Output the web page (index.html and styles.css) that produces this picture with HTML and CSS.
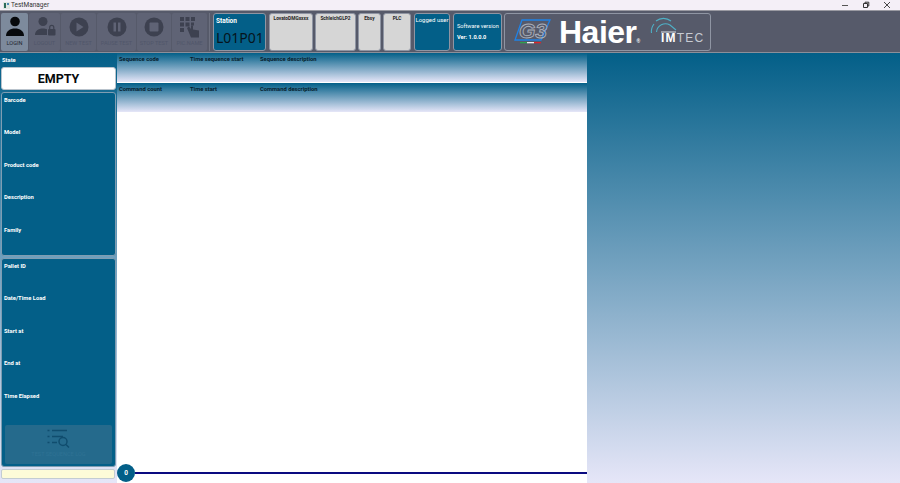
FILE: index.html
```html
<!DOCTYPE html>
<html lang="en">
<head>
    <meta charset="UTF-8">
    <title>TestManager</title>
    <link rel="stylesheet" href="styles.css">
</head>
<body>
    <div class="titlebar">
        <div class="title-left">
            <svg class="app-icon" width="7" height="7" viewBox="0 0 7 7"><rect width="7" height="7" fill="#dfe6e2"/><rect x="1" y="1" width="2" height="5" fill="#2d6b5a"/><rect x="4" y="1" width="2" height="2" fill="#4d89b5"/></svg>
            <span>TestManager</span>
        </div>
        <div class="win-buttons">
            <svg width="8" height="8" viewBox="0 0 8 8"><path d="M1 4.5H7" stroke="#555" stroke-width="1"/></svg>
            <svg width="8" height="8" viewBox="0 0 8 8"><path d="M1.5 2.5H5.5V6.5H1.5ZM3 2.5V1.2H6.8V5H5.5" fill="none" stroke="#333" stroke-width="1"/></svg>
            <svg width="8" height="8" viewBox="0 0 8 8"><path d="M1 1L7 7M7 1L1 7" stroke="#333" stroke-width="0.9"/></svg>
        </div>
    </div>

    <div class="topbar">
        <div class="tool active w-login">
            <svg width="20" height="22" viewBox="0 0 20 22"><circle cx="10" cy="5.5" r="4.8" fill="#07090c"/><path d="M1 20C1 15 5 12.5 10 12.5S19 15 19 20Z" fill="#07090c"/></svg>
            <span>LOGIN</span>
        </div>
        <div class="tool w-logout">
            <svg width="22" height="22" viewBox="0 0 22 22"><circle cx="9" cy="5.5" r="4.5" fill="#3d4150"/><path d="M1 19C1 15 4 12.5 9 12.5C10.5 12.5 12 12.8 13 13.3V19Z" fill="#3d4150"/><rect x="14" y="13" width="7.5" height="6.5" rx="1" fill="#3d4150"/><path d="M15.7 13V11.5A2 2 0 0 1 19.8 11.5V13" fill="none" stroke="#3d4150" stroke-width="1.2"/></svg>
            <span>LOGOUT</span>
        </div>
        <div class="tool w-new">
            <svg width="22" height="22" viewBox="0 0 22 22"><circle cx="11" cy="11" r="9.5" fill="#3d4150"/><path d="M8.5 6.5L15.5 11L8.5 15.5Z" fill="#5f6375"/></svg>
            <span>NEW TEST</span>
        </div>
        <div class="tool w-pause">
            <svg width="22" height="22" viewBox="0 0 22 22"><circle cx="11" cy="11" r="9.5" fill="#3d4150"/><rect x="7.5" y="6.5" width="2.5" height="9" fill="#5f6375"/><rect x="12" y="6.5" width="2.5" height="9" fill="#5f6375"/></svg>
            <span>PAUSE TEST</span>
        </div>
        <div class="tool w-stop">
            <svg width="22" height="22" viewBox="0 0 22 22"><circle cx="11" cy="11" r="9.5" fill="#3d4150"/><rect x="6.5" y="6.5" width="9" height="9" rx="1" fill="#5f6375"/></svg>
            <span>STOP TEST</span>
        </div>
        <div class="tool w-pic">
            <svg width="22" height="22" viewBox="0 0 22 22" fill="#3d4150"><rect x="1" y="1" width="4" height="4"/><rect x="6.5" y="1" width="4" height="4"/><rect x="12" y="1" width="4" height="4"/><rect x="1" y="6.5" width="4" height="4"/><rect x="6.5" y="6.5" width="4" height="4"/><rect x="1" y="12" width="4" height="4"/><rect x="12" y="6.5" width="3" height="3"/><path d="M8 12L10 10.500L12 13V9.500H14V13.500L20 14.500V21.500H12Z"/></svg>
            <span>PIC.NAME</span>
        </div>
        <div class="sep"></div>

        <div class="box blue station">
            <b>Station</b>
            <div class="station-code">L01P01</div>
        </div>
        <div class="box grey w-lovato">LovatoDMGxxxx</div>
        <div class="box grey w-schleich">SchleichGLP2</div>
        <div class="box grey w-ebsy">Ebsy</div>
        <div class="box grey w-plc">PLC</div>
        <div class="box blue logged">Logged user</div>
        <div class="box blue software">
            <span>Software version</span>
            <b>Ver: 1.0.0.0</b>
        </div>

        <div class="logos">
            <div class="logo-g3">
                <svg width="42" height="28" viewBox="0 0 42 28">
                    <path d="M11 2H39L30 22H4Z" fill="none" stroke="#1f82e6" stroke-width="1.300"/>
                    <text x="8" y="19.500" class="g3-text">G3</text>
                    <rect x="9" y="24" width="7" height="1.300" fill="#2e9e4f"/>
                    <rect x="16" y="24" width="7" height="1.300" fill="#eee"/>
                    <rect x="23" y="24" width="7" height="1.300" fill="#d8262c"/>
                </svg>
            </div>
            <div class="logo-haier">Haier<i>®</i></div>
            <div class="logo-imtec">
                <svg width="28" height="23" viewBox="0 0 28 23" fill="none" stroke="#4fb0c6" stroke-width="1.100">
                    <path d="M1.500 16A12 12 0 0 1 4 7"/>
                    <path d="M6 4A12 12 0 0 1 21 4"/>
                    <path d="M6.500 15A9 9 0 0 1 20 8L26 13"/>
                    <path d="M11 15H26" stroke="#cfd6dc"/>
                </svg>
                <div class="imtec-text"><b>IM</b>TEC</div>
            </div>
        </div>
    </div>

    <div class="main">
        <div class="sidebar">
            <div class="state-label">State</div>
            <div class="state-box">EMPTY</div>

            <div class="panel panel-product">
                <div class="row">Barcode</div>
                <div class="row">Model</div>
                <div class="row">Product code</div>
                <div class="row">Description</div>
                <div class="row">Family</div>
            </div>

            <div class="panel panel-pallet">
                <div class="row">Pallet ID</div>
                <div class="row">Date/Time Load</div>
                <div class="row">Start at</div>
                <div class="row">End at</div>
                <div class="row">Time Elapsed</div>
                <div class="log-btn">
                    <svg width="23" height="19" viewBox="0 0 23 19" fill="none" stroke="#104d6e" stroke-width="1.500">
                        <path d="M5 1.500H20M5 7.500H16M5 13.500H10"/>
                        <path d="M0.500 1.500H2.500M0.500 7.500H2.500M0.500 13.500H2.500"/>
                        <circle cx="16" cy="12.500" r="4"/>
                        <path d="M19 15.500L22 18.500"/>
                    </svg>
                    <span>TEST SEQUENCE LOG</span>
                </div>
            </div>

            <div class="status-input"></div>
        </div>

        <div class="center">
            <div class="grid-head">
                <span class="c1">Sequence code</span>
                <span class="c2">Time sequence start</span>
                <span>Sequence description</span>
            </div>
            <div class="grid-head">
                <span class="c1">Command count</span>
                <span class="c2">Time start</span>
                <span>Command description</span>
            </div>
            <div class="grid-body"></div>
            <div class="progress">
                <div class="counter">0</div>
                <div class="progress-line"></div>
            </div>
        </div>

        <div class="right"></div>
    </div>
</body>
</html>
```

FILE: styles.css
```css
* {
    box-sizing: border-box;
}
html, body {
    height: 100%;
}
body {
    margin: 0;
    overflow: hidden;
    display: flex;
    flex-direction: column;
    font-family: Roboto, "Noto Sans", sans-serif;
    font-size: 5.8px;
    background: #fff;
}

/* window title */
.titlebar {
    height: 10px;
    flex: none;
    display: flex;
    justify-content: space-between;
    align-items: center;
    background: #f4eff7;
    color: #333;
}
.title-left {
    display: flex;
    align-items: center;
    gap: 1px;
    padding-left: 3px;
    font-size: 6.5px;
}
.win-buttons {
    display: flex;
    gap: 13px;
    padding-right: 9px;
}

/* top bar */
.topbar {
    height: 43px;
    flex: none;
    display: flex;
    align-items: stretch;
    padding: 2px 0 1px 1px;
    background: #565a6a;
    border-top: 1px solid #9a9aa2;
    border-bottom: 1px solid #8b8f9a;
}
.tool {
    display: flex;
    flex-direction: column;
    align-items: center;
    padding-top: 3px;
    margin-right: 1px;
    border-radius: 2px;
    background: #5f6375;
    color: #50566a;
    font-size: 5.6px;
}
.tool svg {
    flex: none;
}
.tool span {
    margin-top: 2px;
    white-space: nowrap;
}
.tool.active {
    background: #7d8a9c;
    color: #1d2530;
}
.w-login { width: 27px; }
.w-logout { width: 31px; }
.w-new { width: 35px; }
.w-pause { width: 39px; }
.w-stop { width: 34px; }
.w-pic { width: 35px; margin-right: 0; }
.sep {
    width: 1px;
    margin: 0 3px 0 2px;
    background: #6d7180;
}
.box {
    margin-right: 2px;
    border-radius: 3px;
    border: 1px solid #8f95a3;
}
.blue {
    background: #035f88;
    color: #fff;
}
.grey {
    background: #d6d6d6;
    color: #222;
    font-size: 4.8px;
    font-weight: 700;
    text-align: center;
    padding-top: 2px;
}
.station {
    width: 53px;
    margin-right: 3px;
    padding: 3px 2px;
    font-size: 6.5px;
}
.station-code {
    margin-top: 4px;
    color: #06141c;
    font-family: "Noto Sans", sans-serif;
    font-size: 14px;
    line-height: 18px;
    white-space: nowrap;
}
.w-lovato { width: 44px; }
.w-schleich { width: 41px; }
.w-ebsy { width: 23px; }
.w-plc { width: 28px; margin-right: 3px; }
.logged {
    width: 36px;
    margin-right: 3px;
    padding-top: 2px;
    text-align: center;
    white-space: nowrap;
    font-size: 6px;
}
.software {
    width: 49px;
    padding: 9px 0 0 3px;
    display: flex;
    flex-direction: column;
    gap: 5px;
    font-size: 5.6px;
    white-space: nowrap;
}
.logos {
    width: 207px;
    display: flex;
    align-items: center;
    padding-left: 6px;
    border: 1px solid #8f95a3;
    border-radius: 3px;
}
.logo-g3 {
    width: 48px;
    height: 28px;
}
.g3-text {
    font-family: "Liberation Sans", sans-serif;
    font-size: 21px;
    font-weight: 700;
    font-style: italic;
    fill: none;
    stroke: #aab0bb;
    stroke-width: 0.9px;
}
.logo-haier {
    width: 91px;
    color: #fff;
    font-family: "Liberation Sans", sans-serif;
    font-size: 32px;
    font-weight: 700;
    letter-spacing: -0.5px;
}
.logo-haier i {
    font-size: 5px;
    font-style: normal;
}
.logo-imtec {
    display: flex;
    flex-direction: column;
}
.logo-imtec svg {
    margin: -2px 0 -8px;
}
.imtec-text {
    padding-left: 11px;
    color: #c7cbd3;
    font-family: "Liberation Sans", sans-serif;
    font-size: 12px;
    letter-spacing: 1.2px;
    line-height: 13px;
}
.imtec-text b {
    color: #fff;
}

/* main area */
.main {
    flex: 1;
    min-height: 0;
    display: flex;
    background: linear-gradient(#035f88, #e6e6f8);
}
.sidebar {
    width: 117px;
    flex: none;
    padding: 0 1px;
    font-size: 5.8px;
    font-weight: 700;
    color: #fff;
}
.state-label {
    height: 14px;
    padding: 4px 1px 0;
}
.state-box {
    height: 23px;
    margin-bottom: 2px;
    background: #fff;
    border: 1px solid #b9c3cc;
    border-radius: 3px;
    color: #07090c;
    font-size: 12.5px;
    line-height: 21px;
    text-align: center;
}
.panel {
    margin: 0 0 2px;
    padding: 4px 2px 0;
    background: #035f88;
    border: 1px solid #7f9db2;
    border-radius: 3px;
}
.panel-product {
    height: 164px;
}
.panel-pallet {
    height: 209px;
}
.row {
    height: 32.4px;
}
.log-btn {
    height: 39px;
    margin: 0 1px;
    padding-top: 4px;
    display: flex;
    flex-direction: column;
    align-items: center;
    gap: 3px;
    border-radius: 2px;
    background: #256a8c;
    color: #2f7294;
    font-size: 5.6px;
    font-weight: 400;
}
.status-input {
    height: 10px;
    width: 114px;
    background: #fdfbd8;
    border: 1px solid #c3ccd2;
    border-radius: 2px;
}

.center {
    width: 470px;
    flex: none;
    display: flex;
    flex-direction: column;
    background: #fff;
}
.grid-head {
    height: 29px;
    flex: none;
    margin-bottom: 1px;
    padding: 3px 0 0 2px;
    display: flex;
    background: linear-gradient(#035f88, #e6e6f8);
    color: #06202e;
    font-size: 5.8px;
    font-weight: 700;
}
.grid-head span {
    white-space: nowrap;
}
.c1 {
    width: 71px;
}
.c2 {
    width: 70px;
}
.grid-body {
    flex: 1;
}
.progress {
    height: 20px;
    flex: none;
    display: flex;
    align-items: center;
}
.counter {
    width: 18px;
    height: 18px;
    flex: none;
    border-radius: 50%;
    background: #035f88;
    color: #fff;
    font-size: 6.5px;
    font-weight: 700;
    line-height: 18px;
    text-align: center;
}
.progress-line {
    flex: 1;
    height: 2px;
    background: #0a0a80;
}
.right {
    flex: 1;
}
```
